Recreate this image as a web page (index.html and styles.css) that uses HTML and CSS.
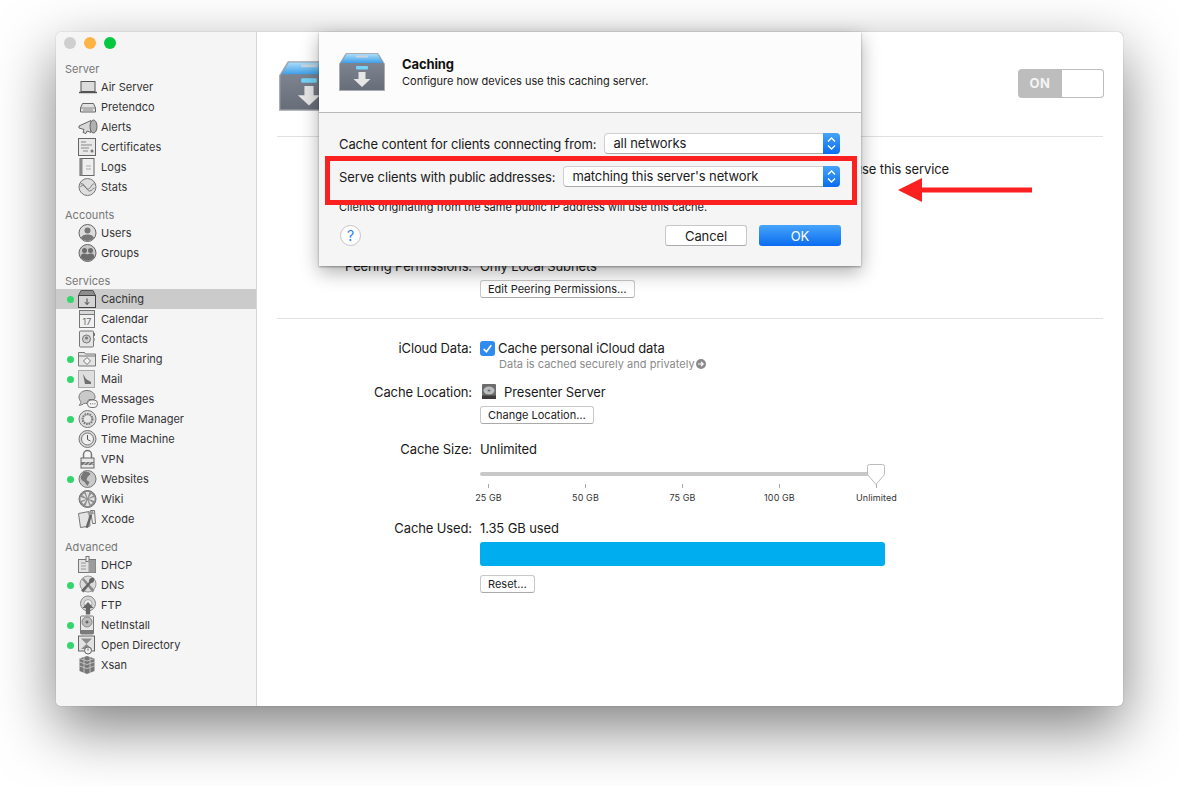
FILE: index.html
```html
<!DOCTYPE html>
<html>
  <head lang="en">
    <meta charset="UTF-8" />
    <title>Server - Caching</title>
    <link rel="stylesheet" href="styles.css">
  </head>

  <body>
    <svg class="defs" width="0" height="0">
      <defs>
        <linearGradient id="box-body" x1="0" y1="0" x2="0" y2="1">
          <stop offset="0" stop-color="#868c97" />
          <stop offset="1" stop-color="#676d78" />
        </linearGradient>
        <linearGradient id="box-top" x1="0" y1="0" x2="0" y2="1">
          <stop offset="0" stop-color="#a9dcfb" />
          <stop offset="1" stop-color="#3f9fe8" />
        </linearGradient>

        <symbol id="box" viewBox="0 0 46 38">
          <path d="M7 .5h32L45.500 11v26.500H.5V11z" fill="url(#box-body)" stroke="#a9adb3" />
          <path d="M7.500 1h31L44 10H2z" fill="url(#box-top)" />
          <rect x="17" y="2.500" width="12" height="2" fill="#c9d4dc" />
          <rect x="17" y="13" width="12" height="3.500" rx="1" fill="#74d3f7" />
          <path d="M19.500 19h7v7h5L23 34l-8.500-8h5z" fill="#e6e6e6" />
        </symbol>

        <symbol id="i-laptop" viewBox="0 0 20 20">
          <rect x="3" y="4.500" width="14" height="10" fill="#dcdcdc" stroke="#555" />
          <path d="M1 15.500h18" stroke="#555" stroke-width="1.500" />
        </symbol>
        <symbol id="i-server" viewBox="0 0 20 20">
          <path d="M2.500 11l2-4.500h11l2 4.500v4H2.500z" fill="#e2e2e2" stroke="#666" />
          <path d="M2.500 11h15M5 13h10" stroke="#888" />
        </symbol>
        <symbol id="i-alert" viewBox="0 0 20 20">
          <path d="M1 9l12-5.500v12L9 14l-1 2.500-3-1 1-3-5-1.500z" fill="#d8d8d8" stroke="#666" />
          <ellipse cx="15.500" cy="9.500" rx="3.500" ry="6.500" fill="#b0b0b0" stroke="#666" />
        </symbol>
        <symbol id="i-cert" viewBox="0 0 20 20">
          <rect x=".5" y="1.500" width="17" height="17" fill="#e8e8e8" stroke="#666" />
          <path d="M3 5h5M3 8h11M3 11h8M5 14h5" stroke="#888" />
          <circle cx="14" cy="14" r="1.500" fill="#777" />
        </symbol>
        <symbol id="i-book" viewBox="0 0 20 20">
          <rect x="2" y="1.500" width="14" height="17" fill="#efefef" stroke="#666" />
          <rect x="2" y="1.500" width="2.500" height="17" fill="#8a8a8a" />
          <path d="M8 9h5M8 12h5" stroke="#aaa" />
        </symbol>
        <symbol id="i-stats" viewBox="0 0 20 20">
          <circle cx="9.500" cy="10" r="8.500" fill="#dedede" stroke="#777" />
          <path d="M2.500 10c3-5 5 3 8 2s3-6 6-5M2.500 7c4-2 6 7 9 7s3-3 5-3" fill="none" stroke="#777" />
        </symbol>
        <symbol id="i-user" viewBox="0 0 20 20">
          <circle cx="9.500" cy="10" r="8.500" fill="#dcdcdc" stroke="#666" />
          <circle cx="9.500" cy="7.500" r="3" fill="#777" />
          <path d="M3 15c1-3 4-3.500 6.500-3.500s5.500.5 6.500 3.500a8.500 8.500 0 0 1-13 0z" fill="#777" />
        </symbol>
        <symbol id="i-group" viewBox="0 0 20 20">
          <circle cx="9.500" cy="10" r="8.500" fill="#c8c8c8" stroke="#666" />
          <circle cx="6.500" cy="7.500" r="2.500" fill="#6c6c6c" />
          <circle cx="12.500" cy="7.500" r="2.500" fill="#6c6c6c" />
          <path d="M2.500 14c.5-3 2-3.500 4-3.500s2.500 1 3 1 1-1 3-1 3.500.5 4 3.500a8.500 8.500 0 0 1-14 0z" fill="#6c6c6c" />
        </symbol>
        <symbol id="i-cache" viewBox="0 0 20 20">
          <path d="M3 1.500h12l2.500 5H.5z" fill="#8d8d8d" stroke="#555" />
          <rect x=".5" y="6.500" width="17" height="12" fill="#d4d4d4" stroke="#444" />
          <path d="M9 9.500v6M6.800 13.200L9 15.500l2.200-2.300" fill="none" stroke="#444" />
        </symbol>
        <symbol id="i-cal" viewBox="0 0 20 20">
          <rect x="1.500" y="1.500" width="15" height="17" fill="#f1f1f1" stroke="#777" />
          <rect x="1.500" y="1.500" width="15" height="4" fill="#d8d8d8" stroke="#777" />
          <text x="9" y="16" class="cal-num">17</text>
        </symbol>
        <symbol id="i-contacts" viewBox="0 0 20 20">
          <rect x="1.500" y="2" width="14" height="16" rx="1" fill="#e6e6e6" stroke="#777" />
          <rect x="15.500" y="4" width="1.500" height="3" fill="#777" />
          <rect x="15.500" y="9" width="1.500" height="3" fill="#aaa" />
          <circle cx="8.500" cy="10" r="4" fill="#cfcfcf" stroke="#777" />
          <circle cx="8.500" cy="9" r="1.500" fill="#777" />
        </symbol>
        <symbol id="i-folder" viewBox="0 0 20 20">
          <path d="M.5 5V3.500h6l1 1.500h10v12H.5z" fill="#e4e4e4" stroke="#777" />
          <path d="M.5 7h17" stroke="#777" />
          <path d="M9 8.500l3.500 3.500L9 15.500 5.500 12z" fill="#f4f4f4" stroke="#777" />
        </symbol>
        <symbol id="i-mail" viewBox="0 0 20 20">
          <rect x=".5" y="1.500" width="16" height="17" fill="#dedede" stroke="#666" stroke-dasharray="1 1" />
          <path d="M5 5l3 5 5 3v2H7l-1-5z" fill="#6f6f6f" />
        </symbol>
        <symbol id="i-msg" viewBox="0 0 20 20">
          <path d="M9 1.500c4.500 0 8 2.700 8 6.500 0 1-.3 1.800-.7 2.500H12c-2 0-3 2-3 4-1 0-2 0-3-.3-1 1.500-3 2-5 2 1-1 2-2 1.800-3.700C1.500 11 1 9.500 1 8c0-3.800 3.500-6.500 8-6.500z" fill="#c9c9c9" stroke="#777" />
          <rect x="9.500" y="11" width="10" height="7.500" rx="3.500" fill="#f5f5f5" stroke="#777" />
          <path d="M12 14.800h5.500" stroke="#666" stroke-dasharray="1 1.200" />
        </symbol>
        <symbol id="i-gear" viewBox="0 0 20 20">
          <circle cx="9.500" cy="10" r="8.500" fill="#dcdcdc" stroke="#777" />
          <circle cx="9.500" cy="10" r="5" fill="#bdbdbd" stroke="#777" stroke-width="2" stroke-dasharray="1.500 1" />
          <circle cx="9.500" cy="10" r="3.500" fill="#e8e8e8" />
        </symbol>
        <symbol id="i-clock" viewBox="0 0 20 20">
          <circle cx="9.500" cy="10" r="8.500" fill="#d6d6d6" stroke="#777" />
          <circle cx="9.500" cy="10" r="6" fill="#efefef" stroke="#777" />
          <path d="M9.500 6v4.500l3 1.500" fill="none" stroke="#555" />
        </symbol>
        <symbol id="i-lock" viewBox="0 0 20 20">
          <path d="M5.500 9V5.500a4 4 0 0 1 8 0V9" fill="none" stroke="#777" stroke-width="1.500" />
          <rect x="3" y="9" width="13" height="10" fill="#e8e8e8" stroke="#666" />
          <path d="M3 13h13v3H3z" fill="#777" />
          <path d="M5.500 16l3-3M9.500 16l3-3M13.500 16l2-2" stroke="#ddd" />
        </symbol>
        <symbol id="i-globe" viewBox="0 0 20 20">
          <circle cx="9.500" cy="10" r="8.500" fill="#c9c9c9" stroke="#777" />
          <path d="M5.500 3c3-1 6 0 7 2l-3 3-1 3 3 2-2 4-3-4-3-2-1-3z" fill="#777" />
        </symbol>
        <symbol id="i-wiki" viewBox="0 0 20 20">
          <circle cx="9.500" cy="10" r="8.500" fill="#8f8f8f" stroke="#777" />
          <path d="M9.500 9L7.500 3h4zM10.500 10l6-2v4zM9.500 11l2 6h-4zM8.500 10l-6 2V8zM10.300 9.200l3-4.500 2 2zM10.300 10.800l4.500 3-2 2zM8.700 10.800l-3 4.500-2-2zM8.700 9.200L4.200 6.200l2-2z" fill="#e2e2e2" />
        </symbol>
        <symbol id="i-xcode" viewBox="0 0 20 20">
          <path d="M.5 4.500L11 2.500 12 17 2.500 18.500z" fill="#e4e4e4" stroke="#777" />
          <path d="M12.500 1.500h4l1 13-3 0z" fill="#ededed" stroke="#777" />
          <path d="M12 5L7.500 18.500l2.500.5L14 6.500z" fill="#666" />
          <path d="M9 3l6-1 1 3-5 1z" fill="#9a9a9a" />
        </symbol>
        <symbol id="i-dhcp" viewBox="0 0 20 20">
          <rect x=".5" y="4.500" width="17" height="13" fill="#e2e2e2" stroke="#777" />
          <rect x="8" y="1.500" width="3" height="5" fill="#eee" stroke="#777" />
          <rect x="10.500" y="5" width="7" height="12.500" fill="#9c9c9c" />
          <path d="M3 8h5M3 11h5M3 14h5" stroke="#999" />
        </symbol>
        <symbol id="i-dns" viewBox="0 0 20 20">
          <circle cx="10" cy="9" r="8" fill="#dcdcdc" stroke="#999" />
          <path d="M4 4.500l1.500-1.500L16.500 15l-1.800 2.500z" fill="#8a8a8a" />
          <path d="M16 3c1 3-1 5-3 5l-7.500 9.500-2.500-2 8-8.500c-.5-3 2-5 5-4z" fill="#666" />
        </symbol>
        <symbol id="i-ftp" viewBox="0 0 20 20">
          <circle cx="10" cy="8.500" r="7.500" fill="#d6d6d6" stroke="#888" />
          <circle cx="10" cy="8.500" r="4" fill="#eee" stroke="#aaa" />
          <path d="M7.800 19.500V13H4.500L10 7l5.500 6h-3.300v6.500z" fill="#666" />
        </symbol>
        <symbol id="i-net" viewBox="0 0 20 20">
          <rect x="2.500" y="1" width="13" height="18" rx="1" fill="#e8e8e8" stroke="#777" />
          <circle cx="9" cy="7" r="5" fill="#bcbcbc" stroke="#888" />
          <circle cx="9" cy="7" r="1.500" fill="#666" />
          <rect x="2.500" y="15" width="13" height="4" fill="#7a7a7a" />
        </symbol>
        <symbol id="i-dir" viewBox="0 0 20 20">
          <rect x=".5" y="1" width="16" height="15" fill="#e2e2e2" stroke="#666" />
          <path d="M3 3.500h11L8.500 9zM3 14l5.500-5 5.500 5z" fill="#8c8c8c" />
          <circle cx="10" cy="15.500" r="3.500" fill="#eee" stroke="#666" />
          <path d="M10 13.500v2" stroke="#666" />
        </symbol>
        <symbol id="i-xsan" viewBox="0 0 20 20">
          <path d="M9 1l7.500 2.500V16L9 19l-7.500-3V3.500z" fill="#777" />
          <path d="M1.500 7L9 9.500 16.500 7M1.500 11L9 13.500l7.500-2.500M1.500 3.500L9 6l7.500-2.500M6 1.800v16.500M12 1.800v16.500" fill="none" stroke="#cfcfcf" stroke-width=".8" />
        </symbol>
      </defs>
    </svg>

    <div class="window">
      <div class="sidebar">
        <div class="lights">
          <span class="light grey"></span>
          <span class="light orange"></span>
          <span class="light green"></span>
        </div>

        <div class="group">
          <h4>Server</h4>
          <div class="item"><i></i><svg class="ico"><use href="#i-laptop" /></svg>Air Server</div>
          <div class="item"><i></i><svg class="ico"><use href="#i-server" /></svg>Pretendco</div>
          <div class="item"><i></i><svg class="ico"><use href="#i-alert" /></svg>Alerts</div>
          <div class="item"><i></i><svg class="ico"><use href="#i-cert" /></svg>Certificates</div>
          <div class="item"><i></i><svg class="ico"><use href="#i-book" /></svg>Logs</div>
          <div class="item"><i></i><svg class="ico"><use href="#i-stats" /></svg>Stats</div>
        </div>

        <div class="group">
          <h4>Accounts</h4>
          <div class="item"><i></i><svg class="ico"><use href="#i-user" /></svg>Users</div>
          <div class="item"><i></i><svg class="ico"><use href="#i-group" /></svg>Groups</div>
        </div>

        <div class="group">
          <h4>Services</h4>
          <div class="item current"><i class="on"></i><svg class="ico"><use href="#i-cache" /></svg>Caching</div>
          <div class="item"><i></i><svg class="ico"><use href="#i-cal" /></svg>Calendar</div>
          <div class="item"><i></i><svg class="ico"><use href="#i-contacts" /></svg>Contacts</div>
          <div class="item"><i class="on"></i><svg class="ico"><use href="#i-folder" /></svg>File Sharing</div>
          <div class="item"><i class="on"></i><svg class="ico"><use href="#i-mail" /></svg>Mail</div>
          <div class="item"><i></i><svg class="ico"><use href="#i-msg" /></svg>Messages</div>
          <div class="item"><i class="on"></i><svg class="ico"><use href="#i-gear" /></svg>Profile Manager</div>
          <div class="item"><i></i><svg class="ico"><use href="#i-clock" /></svg>Time Machine</div>
          <div class="item"><i></i><svg class="ico"><use href="#i-lock" /></svg>VPN</div>
          <div class="item"><i class="on"></i><svg class="ico"><use href="#i-globe" /></svg>Websites</div>
          <div class="item"><i></i><svg class="ico"><use href="#i-wiki" /></svg>Wiki</div>
          <div class="item"><i></i><svg class="ico"><use href="#i-xcode" /></svg>Xcode</div>
        </div>

        <div class="group">
          <h4>Advanced</h4>
          <div class="item"><i></i><svg class="ico"><use href="#i-dhcp" /></svg>DHCP</div>
          <div class="item"><i class="on"></i><svg class="ico"><use href="#i-dns" /></svg>DNS</div>
          <div class="item"><i></i><svg class="ico"><use href="#i-ftp" /></svg>FTP</div>
          <div class="item"><i class="on"></i><svg class="ico"><use href="#i-net" /></svg>NetInstall</div>
          <div class="item"><i class="on"></i><svg class="ico"><use href="#i-dir" /></svg>Open Directory</div>
          <div class="item"><i></i><svg class="ico"><use href="#i-xsan" /></svg>Xsan</div>
        </div>
      </div>

      <div class="main">
        <div class="head">
          <svg class="head-ico"><use href="#box" /></svg>
          <div class="toggle"><span class="toggle-on">ON</span><span class="toggle-knob"></span></div>
        </div>
        <hr />

        <div class="row status">
          <span class="label"></span>
          <span class="value status-text">use this service</span>
        </div>

        <div class="row peering">
          <span class="label">Peering Permissions:</span>
          <span class="value">Only Local Subnets</span>
        </div>
        <div class="under"><button class="btn">Edit Peering Permissions…</button></div>
        <hr class="hr-2" />

        <div class="row icloud">
          <span class="label">iCloud Data:</span>
          <span class="value check-line">
            <span class="check"><svg width="15" height="15" viewBox="0 0 14 14"><path d="M3.500 7.500l2.500 2.500 4.500-6" fill="none" stroke="#fff" stroke-width="1.600" /></svg></span>
            Cache personal iCloud data
          </span>
        </div>
        <div class="under note">
          Data is cached securely and privately<svg class="more" width="10" height="10" viewBox="0 0 10 10"><circle cx="5" cy="5" r="5" fill="#8a8a8a" /><path d="M2 5h5M5 2.800L7.200 5 5 7.200" fill="none" stroke="#fff" stroke-width="1.200" /></svg>
        </div>

        <div class="row location">
          <span class="label">Cache Location:</span>
          <span class="value disk-line">
            <svg class="disk" width="16" height="16" viewBox="0 0 16 16">
              <rect x="1" y="0" width="14" height="15" rx="1" fill="#6d6d6d" />
              <rect x="1" y="11.500" width="14" height="3.500" fill="#3c3c3c" />
              <ellipse cx="8" cy="6.500" rx="5.500" ry="4" fill="#b9bdbf" />
              <ellipse cx="8" cy="6.500" rx="1.500" ry="1" fill="#6d6d6d" />
            </svg>
            Presenter Server
          </span>
        </div>
        <div class="under loc-btn"><button class="btn">Change Location…</button></div>

        <div class="row size">
          <span class="label">Cache Size:</span>
          <span class="value">Unlimited</span>
        </div>
        <div class="under slider">
          <div class="track">
            <svg class="thumb" width="18" height="22" viewBox="0 0 18 22">
              <path d="M2.500.5h13a2 2 0 0 1 2 2v8L9 20.500.5 10.500v-8a2 2 0 0 1 2-2z" fill="#fff" stroke="#bbb" />
            </svg>
          </div>
          <div class="scale">
            <span class="tick">25 GB</span>
            <span class="tick">50 GB</span>
            <span class="tick">75 GB</span>
            <span class="tick">100 GB</span>
            <span class="tick">Unlimited</span>
          </div>
        </div>

        <div class="row used">
          <span class="label">Cache Used:</span>
          <span class="value">1.35 GB used</span>
        </div>
        <div class="under"><div class="bar"></div></div>
        <div class="under reset"><button class="btn">Reset…</button></div>
      </div>

      <div class="dialog">
        <div class="dialog-head">
          <svg class="dialog-ico"><use href="#box" /></svg>
          <div>
            <div class="dialog-title">Caching</div>
            <div class="dialog-sub">Configure how devices use this caching server.</div>
          </div>
        </div>
        <div class="dialog-body">
          <div class="field">
            <span>Cache content for clients connecting from:</span>
            <div class="select">all networks<span class="stepper"><svg width="9" height="13" viewBox="0 0 9 13"><path d="M1 4.500L4.500 1 8 4.500M1 8.500L4.500 12 8 8.500" fill="none" stroke="#fff" stroke-width="1.300" /></svg></span></div>
          </div>
          <div class="field">
            <span>Serve clients with public addresses:</span>
            <div class="select">matching this server's network<span class="stepper"><svg width="9" height="13" viewBox="0 0 9 13"><path d="M1 4.500L4.500 1 8 4.500M1 8.500L4.500 12 8 8.500" fill="none" stroke="#fff" stroke-width="1.300" /></svg></span></div>
          </div>
          <div class="dialog-note">Clients originating from the same public IP address will use this cache.</div>
          <div class="dialog-foot">
            <span class="help">?</span>
            <button class="btn wide">Cancel</button>
            <button class="btn wide ok">OK</button>
          </div>
        </div>
      </div>

      <div class="red-box"></div>
      <svg class="red-arrow" width="134" height="26" viewBox="0 0 134 26">
        <path d="M0 13L24 1v9.500h110v5H24V25z" fill="#fc2121" />
      </svg>
    </div>
  </body>
</html>
```

FILE: styles.css
```css
html,
body {
  height: 786px;
}

body,
div,
h4,
hr {
  margin: 0;
  padding: 0;
}

body {
  background: #fff;
  color: #1a1a1a;
  font: 13px/16px Inter, "Liberation Sans", sans-serif;
  letter-spacing: -0.12px;
}

.defs {
  display: block;
}

.window {
  position: relative;
  display: flex;
  width: 1067px;
  height: 674px;
  margin: 32px 56px 0;
  border-radius: 5px;
  background: #fff;
  box-shadow: 0 0 1px rgba(0, 0, 0, 0.45), 0 22px 60px rgba(0, 0, 0, 0.5);
}

.sidebar {
  flex: none;
  width: 201px;
  padding-top: 28px;
  box-sizing: border-box;
  border-right: 1px solid #d6d6d6;
  border-radius: 5px 0 0 5px;
  background: #f5f5f5;
  font-size: 11px;
  letter-spacing: 0.03px;
  color: #333;
}

.lights {
  position: absolute;
  top: 5px;
  left: 8px;
  display: flex;
  gap: 8px;
}

.light {
  width: 12px;
  height: 12px;
  border-radius: 50%;
}

.grey {
  background: #cfcfcf;
}

.orange {
  background: #fdb444;
}

.green {
  background: #05c840;
}

.group {
  margin-bottom: 9px;
}

.group h4 {
  height: 17px;
  padding-left: 9px;
  font-size: 11px;
  font-weight: 400;
  line-height: 19px;
  color: #777;
}

.item {
  display: flex;
  align-items: center;
  height: 20px;
  padding-left: 11px;
}

.item i {
  flex: none;
  width: 7px;
  height: 7px;
  margin-right: 4px;
  border-radius: 50%;
}

.item i.on {
  background: #33d66b;
}

.item.current {
  background: #cbcbcb;
}

.ico {
  flex: none;
  width: 20px;
  height: 20px;
  margin-right: 3px;
}

.cal-num {
  font-size: 9px;
  letter-spacing: 0;
  text-anchor: middle;
  fill: #666;
}

.main {
  flex: 1;
  padding: 0 20px;
}

.head {
  display: flex;
  align-items: flex-start;
  justify-content: space-between;
  height: 104px;
}

.head-ico {
  width: 60px;
  height: 50px;
  margin: 29px 0 0 2px;
}

.toggle {
  display: flex;
  width: 86px;
  height: 29px;
  margin: 37px -1px 0 0;
  border-radius: 4px;
  background: #bdbdbd;
  overflow: hidden;
}

.toggle-on {
  width: 44px;
  font-size: 13px;
  font-weight: 700;
  line-height: 29px;
  letter-spacing: 0.5px;
  text-align: center;
  color: #f4f4f4;
}

.toggle-knob {
  width: 41px;
  border: 1px solid #bdbdbd;
  border-left: 0;
  border-radius: 0 4px 4px 0;
  background: #fff;
}

hr {
  height: 1px;
  border: 0;
  background: #e0e0e0;
}

.hr-2 {
  margin-top: 20px;
}

.row {
  display: flex;
  height: 16px;
}

.label {
  flex: none;
  width: 195px;
  margin-right: 8px;
  text-align: right;
}

.under {
  padding-left: 203px;
}

.status {
  margin-top: 24px;
}

.status-text {
  width: 469px;
  text-align: right;
}

.peering {
  margin-top: 81px;
}

.peering + .under {
  margin-top: 6px;
}

.btn {
  height: 18px;
  padding: 0 7px;
  border: 1px solid #c8c8c8;
  border-bottom-color: #aaa;
  border-radius: 3px;
  background: #fff;
  color: #222;
  font: 11px/16px Inter, "Liberation Sans", sans-serif;
  letter-spacing: 0;
}

.icloud {
  margin-top: 21px;
}

.check-line {
  display: flex;
  align-items: center;
}

.check {
  display: block;
  width: 15px;
  height: 15px;
  margin-right: 3px;
  border-radius: 3px;
  background: #2f8bee;
}

.note {
  height: 16px;
  padding-left: 222px;
  font-size: 11px;
  letter-spacing: 0.02px;
  color: #8a8a8a;
}

.more {
  margin-left: 1px;
  vertical-align: -1px;
}

.location {
  margin-top: 12px;
}

.disk-line {
  display: flex;
  align-items: center;
}

.disk {
  margin: 0 7px 0 1px;
}

.loc-btn {
  margin-top: 6px;
}

.size {
  margin-top: 17px;
}

.slider {
  margin-top: 15px;
}

.track {
  position: relative;
  width: 397px;
  height: 4px;
  border-radius: 2px;
  background: #c8c8c8;
}

.thumb {
  position: absolute;
  top: -8px;
  left: 387px;
}

.scale {
  display: flex;
  margin: 8px 0 0 -40px;
  font-size: 9px;
  line-height: 11px;
  letter-spacing: 0.1px;
}

.tick {
  flex: none;
  width: 97px;
  text-align: center;
  color: #333;
}

.tick::before {
  content: "";
  display: block;
  width: 1px;
  height: 4px;
  margin: 0 auto 4px;
  background: #aaa;
}

.used {
  margin-top: 17px;
}

.bar {
  width: 405px;
  height: 24px;
  margin-top: 6px;
  border-radius: 3px;
  background: #00adef;
}

.reset {
  margin-top: 9px;
}

.dialog {
  position: absolute;
  top: 0;
  left: 263px;
  display: flex;
  flex-direction: column;
  width: 542px;
  height: 234px;
  background: #f5f5f5;
  box-shadow: 0 1px 2px rgba(0, 0, 0, 0.35), 0 6px 18px rgba(0, 0, 0, 0.32);
}

.dialog-head {
  display: flex;
  align-items: center;
  gap: 17px;
  height: 81px;
  padding: 0 20px;
  box-sizing: border-box;
  border-bottom: 1px solid #b9b9b9;
  background: #fcfcfc;
}

.dialog-ico {
  width: 46px;
  height: 38px;
}

.dialog-title {
  margin-bottom: 2px;
  font-weight: 700;
  line-height: 16px;
  color: #111;
}

.dialog-sub {
  font-size: 11px;
  line-height: 15px;
  letter-spacing: 0;
}

.dialog-body {
  padding: 20px 21px 0 20px;
}

.field {
  display: flex;
  align-items: center;
  gap: 8px;
  height: 21px;
  margin-bottom: 12px;
}

.select {
  position: relative;
  flex: 1;
  height: 21px;
  padding-left: 8px;
  box-sizing: border-box;
  border: 1px solid #cfcfcf;
  border-bottom-color: #aaa;
  border-radius: 4px;
  background: #fff;
  line-height: 19px;
}

.stepper {
  position: absolute;
  top: -1px;
  right: -1px;
  display: flex;
  align-items: center;
  justify-content: center;
  width: 17px;
  height: 21px;
  border-radius: 0 4px 4px 0;
  background: linear-gradient(#47a4fb, #0a6cf0);
}

.dialog-note {
  margin-top: 2px;
  font-size: 11px;
  line-height: 16px;
  letter-spacing: 0.03px;
}

.dialog-foot {
  display: flex;
  align-items: center;
  margin: 10px -1px 0 1px;
}

.help {
  width: 19px;
  height: 19px;
  margin-right: auto;
  border: 1px solid #c4c4c4;
  border-radius: 50%;
  background: #fff;
  font-size: 14px;
  line-height: 19px;
  text-align: center;
  color: #1f84f5;
}

.wide {
  width: 82px;
  height: 21px;
  font-size: 13px;
  letter-spacing: -0.12px;
}

.ok {
  margin-left: 12px;
  border: 0;
  background: linear-gradient(#47a4fb, #0a6cf0);
  color: #fff;
}

.red-box {
  position: absolute;
  top: 124px;
  left: 269px;
  width: 522px;
  height: 39px;
  border: 5px solid #fc2121;
}

.red-arrow {
  position: absolute;
  top: 145px;
  left: 842px;
}
```
